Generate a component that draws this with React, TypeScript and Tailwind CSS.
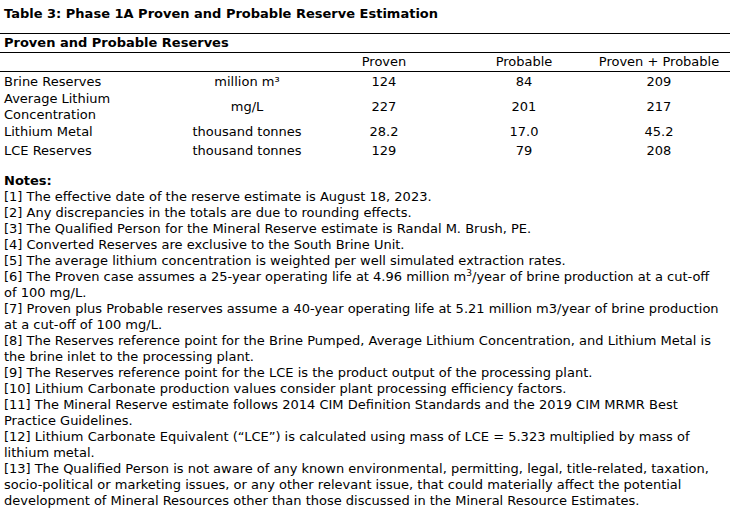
const rows = [
  { label: ["Brine Reserves"], unit: "million m³", proven: "124", probable: "84", total: "209", h: "h-[19px]" },
  { label: ["Average Lithium", "Concentration"], unit: "mg/L", proven: "227", probable: "201", total: "217", h: "h-[32px]" },
  { label: ["Lithium Metal"], unit: "thousand tonnes", proven: "28.2", probable: "17.0", total: "45.2", h: "h-[18px]" },
  { label: ["LCE Reserves"], unit: "thousand tonnes", proven: "129", probable: "79", total: "208", h: "h-[19px]" },
];

const cols = "grid grid-cols-[186px_122px_152px_128px_142px]";

export default function App() {
  return (
    <div className="w-[738px] h-[515px] overflow-hidden bg-white text-black font-['Verdana','DejaVu_Sans',sans-serif] text-[13px] leading-[16px]">
      <div className="pl-1 pt-[6px] font-bold">Table 3: Phase 1A Proven and Probable Reserve Estimation</div>

      {/* Table */}
      <div className="mt-[11px] w-[730px] border-t border-black">
        <div className="h-[19px] pl-1 flex items-center font-bold border-b border-black">Proven and Probable Reserves</div>
        <div className={`${cols} h-[19px] items-center border-b border-black`}>
          <div />
          <div />
          <div className="text-center">Proven</div>
          <div className="text-center">Probable</div>
          <div className="text-center">Proven + Probable</div>
        </div>
        {rows.map((r) => (
          <div key={r.label[0]} className={`${cols} ${r.h} items-center`}>
            <div className="pl-1">
              {r.label.map((l) => (
                <div key={l}>{l}</div>
              ))}
            </div>
            <div className="text-center">{r.unit}</div>
            <div className="text-center">{r.proven}</div>
            <div className="text-center">{r.probable}</div>
            <div className="text-center">{r.total}</div>
          </div>
        ))}
      </div>

      {/* Notes */}
      <div className="mt-[13px] pl-1 w-[722px]">
        <div className="font-bold">Notes:</div>
        <p>[1] The effective date of the reserve estimate is August 18, 2023.</p>
        <p>[2] Any discrepancies in the totals are due to rounding effects.</p>
        <p>[3] The Qualified Person for the Mineral Reserve estimate is Randal M. Brush, PE.</p>
        <p>[4] Converted Reserves are exclusive to the South Brine Unit.</p>
        <p>[5] The average lithium concentration is weighted per well simulated extraction rates.</p>
        <p>
          [6] The Proven case assumes a 25-year operating life at 4.96 million m
          <span className="align-super text-[9px] leading-none">3</span>/year of brine production at a cut-off of 100 mg/L.
        </p>
        <p>[7] Proven plus Probable reserves assume a 40-year operating life at 5.21 million m3/year of brine production at a cut-off of 100 mg/L.</p>
        <p>[8] The Reserves reference point for the Brine Pumped, Average Lithium Concentration, and Lithium Metal is the brine inlet to the processing plant.</p>
        <p>[9] The Reserves reference point for the LCE is the product output of the processing plant.</p>
        <p>[10] Lithium Carbonate production values consider plant processing efficiency factors.</p>
        <p>[11] The Mineral Reserve estimate follows 2014 CIM Definition Standards and the 2019 CIM MRMR Best Practice Guidelines.</p>
        <p>[12] Lithium Carbonate Equivalent (“LCE”) is calculated using mass of LCE = 5.323 multiplied by mass of lithium metal.</p>
        <p>[13] The Qualified Person is not aware of any known environmental, permitting, legal, title-related, taxation, socio-political or marketing issues, or any other relevant issue, that could materially affect the potential development of Mineral Resources other than those discussed in the Mineral Resource Estimates.</p>
      </div>
    </div>
  );
}
